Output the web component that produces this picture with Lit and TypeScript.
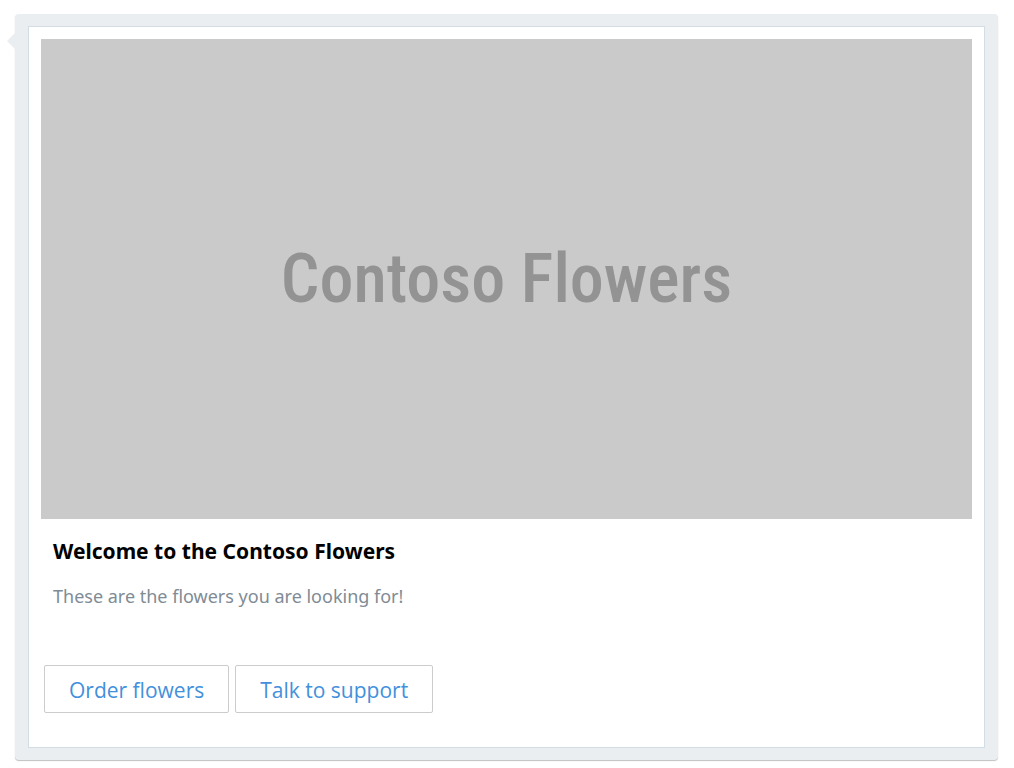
import { LitElement, html, css } from "lit";
import { customElement } from "lit/decorators.js";

@customElement("app-root")
export class AppRoot extends LitElement {
  static styles = css`
    :host {
      display: block;
      box-sizing: border-box;
      padding: 14px 16px 7px 15px;
      background: #fff;
      font-family: "Segoe UI", "Noto Sans", "Open Sans", sans-serif;
    }
    .bubble {
      position: relative;
      padding: 12px 13px;
      border-radius: 4px;
      background: #eaeef1;
      box-shadow: 0 1px 1px rgba(0, 0, 0, 0.25);
    }
    .tail {
      position: absolute;
      left: -8px;
      top: 19px;
      width: 8px;
      height: 16px;
      fill: #eaeef1;
    }
    .card {
      padding: 12px 12px 34px;
      border: 1px solid #d2dde5;
      background: #fff;
    }
    .banner {
      display: flex;
      align-items: center;
      justify-content: center;
      aspect-ratio: 931 / 480;
      background: #cacaca;
      color: #939393;
      font-family: "Futura Condensed", "Roboto Condensed", "Liberation Sans Narrow", sans-serif;
      font-size: 68px;
      font-weight: 500;
      line-height: 88px;
      white-space: nowrap;
    }
    .title {
      margin: 16px 12px 0;
      color: #000;
      font-size: 21px;
      font-weight: 700;
      line-height: 32px;
    }
    .text {
      margin: 16px 12px 0;
      color: #808c95;
      font-size: 18px;
      line-height: 26px;
    }
    .actions {
      display: flex;
      flex-wrap: wrap;
      gap: 6px;
      margin: 56px 3px 0;
    }
    .action {
      height: 48px;
      padding: 2px 24px 0;
      border: 1px solid #ccc;
      border-radius: 2px;
      background: #fff;
      color: #4290dc;
      font-family: "Segoe UI", "Open Sans", sans-serif;
      font-size: 21px;
      line-height: 32px;
    }
  `;

  private actions = ["Order flowers", "Talk to support"];

  render() {
    return html`
      <article class="bubble">
        <svg class="tail" viewBox="0 0 8 16" aria-hidden="true"><path d="M8 0v16L0 8z" /></svg>
        <div class="card">
          <div class="banner">Contoso Flowers</div>
          <h1 class="title">Welcome to the Contoso Flowers</h1>
          <p class="text">These are the flowers you are looking for!</p>
          <div class="actions">
            ${this.actions.map((label) => html`<button class="action" type="button">${label}</button>`)}
          </div>
        </div>
      </article>
    `;
  }
}
